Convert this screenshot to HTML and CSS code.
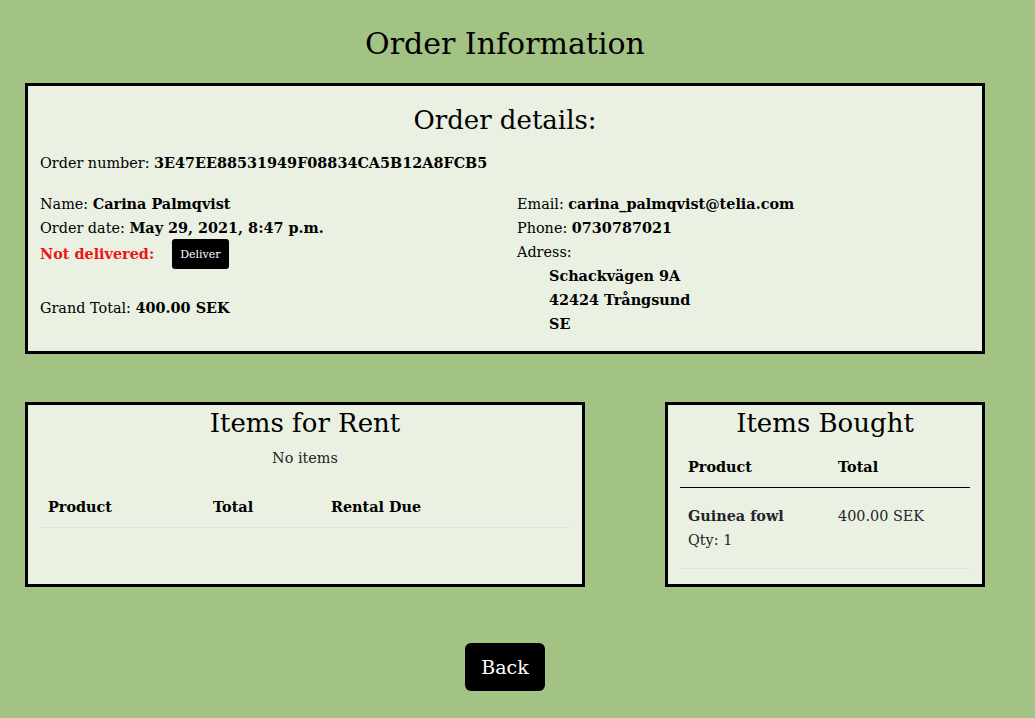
FILE: index.html
```html
<!DOCTYPE html>
<html lang="en">
<head>
<meta charset="utf-8">
<title>Order Information</title>
<link rel="stylesheet" href="styles.css">
</head>
<body>
<main class="page">
  <h1 class="page-title">Order Information</h1>

  <section class="card order-card">
    <h2 class="card-title">Order details:</h2>
    <p class="order-number">Order number: <b>3E47EE88531949F08834CA5B12A8FCB5</b></p>
    <div class="cols">
      <div class="col">
        <div class="line">Name: <b>Carina Palmqvist</b></div>
        <div class="line">Order date: <b>May 29, 2021, 8:47 p.m.</b></div>
        <div class="line status"><b class="not-delivered">Not delivered:</b><button class="deliver-btn">Deliver</button></div>
        <div class="line total">Grand Total: <b>400.00 SEK</b></div>
      </div>
      <div class="col">
        <div class="line">Email: <b>carina_palmqvist@telia.com</b></div>
        <div class="line">Phone: <b>0730787021</b></div>
        <div class="line">Adress:</div>
        <div class="address">
          <div class="line"><b>Schackvägen 9A</b></div>
          <div class="line"><b>42424 Trångsund</b></div>
          <div class="line"><b>SE</b></div>
        </div>
      </div>
    </div>
  </section>

  <div class="lower">
    <section class="card rent-card">
      <h2 class="card-title">Items for Rent</h2>
      <p class="no-items">No items</p>
      <table class="tbl rent-tbl">
        <thead>
          <tr><th>Product</th><th>Total</th><th>Rental Due</th></tr>
        </thead>
        <tbody></tbody>
      </table>
    </section>

    <section class="card bought-card">
      <h2 class="card-title">Items Bought</h2>
      <table class="tbl bought-tbl">
        <thead>
          <tr><th>Product</th><th>Total</th></tr>
        </thead>
        <tbody>
          <tr>
            <td><b>Guinea fowl</b><br>Qty: 1</td>
            <td>400.00 SEK</td>
          </tr>
        </tbody>
      </table>
    </section>
  </div>

  <div class="actions">
    <button class="back-btn">Back</button>
  </div>
</main>
</body>
</html>
```

FILE: styles.css
```css
* { box-sizing: border-box; }

html, body {
  margin: 0;
  padding: 0;
}

body {
  background: #a3c385;
  font-family: "DejaVu Serif", "Liberation Serif", serif;
  font-size: 14.4px;
  line-height: 24px;
  color: #212529;
}

.page {
  width: 960px;
  margin-left: 25px;
  padding-top: 24px;
}

.page-title {
  margin: 0 0 19px 0;
  text-align: center;
  font-weight: 400;
  font-size: 30px;
  line-height: 40px;
  color: #000;
}

.card {
  background: #eaf0e2;
  border: 3px solid #000;
}

.card-title {
  margin: 0;
  text-align: center;
  font-weight: 400;
  font-size: 26px;
  line-height: 34px;
  color: #000;
}

b { font-weight: 700; color: #000; }

.order-card {
  padding: 17px 12px 10px 12px;
  height: 271px;
}

.order-number {
  margin: 14px 0 17px 0;
  color: #000;
}

.cols {
  display: flex;
}

.col {
  flex: 0 0 50%;
}
.col + .col { padding-left: 12px; }

.line { color: #000; }

.status {
  display: flex;
  align-items: center;
  height: 30px;
  margin-top: -1px;
}

.not-delivered {
  color: #ef1515;
}

.deliver-btn {
  margin-left: 18px;
  height: 30px;
  padding: 0 8px;
  background: #000;
  color: #fff;
  border: none;
  border-radius: 3px;
  font-family: "DejaVu Serif", "Liberation Serif", serif;
  font-size: 11px;
}

.total {
  margin-top: 27px;
}

.address {
  padding-left: 32px;
}

.lower {
  display: flex;
  margin-top: 48px;
}

.rent-card {
  width: 560px;
  height: 185px;
  padding: 1px 12px 0 12px;
}

.bought-card {
  width: 320px;
  height: 185px;
  margin-left: 80px;
  padding: 1px 12px 0 12px;
}

.no-items {
  margin: 6px 0 0 0;
  text-align: center;
  color: #212529;
}

.tbl {
  width: 100%;
  border-collapse: collapse;
  color: #212529;
}

.tbl th {
  text-align: left;
  padding: 8px;
  color: #000;
  font-weight: 700;
}

.tbl td {
  text-align: left;
  vertical-align: top;
  padding: 16px 8px;
}

.rent-tbl { margin-top: 17px; }
.rent-tbl thead tr { border-bottom: 1px solid #dee2e6; }
.rent-tbl th:nth-child(1) { width: 165px; }
.rent-tbl th:nth-child(2) { width: 118px; }

.bought-tbl { margin-top: 7px; }
.bought-tbl thead tr { border-bottom: 1px solid #000; }
.bought-tbl tbody tr { border-bottom: 1px solid #dee2e6; }
.bought-tbl th:nth-child(1), .bought-tbl td:nth-child(1) { width: 150px; }
.bought-tbl td b { color: #212529; }

.actions {
  display: flex;
  justify-content: center;
  margin-top: 56px;
}

.back-btn {
  width: 80px;
  height: 48px;
  background: #000;
  color: #fff;
  border: none;
  border-radius: 6px;
  font-family: "DejaVu Serif", "Liberation Serif", serif;
  font-size: 19px;
}
```
